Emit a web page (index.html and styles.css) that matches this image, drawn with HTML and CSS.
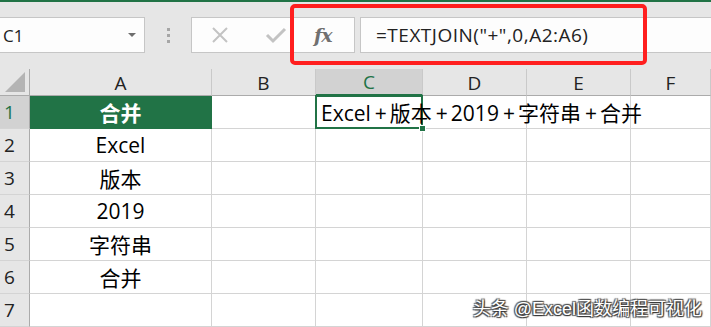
FILE: index.html
```html
<!DOCTYPE html>
<html lang="zh-CN">
<head>
<meta charset="utf-8">
<link rel="stylesheet" href="styles.css">
</head>
<body>
<div class="app">
  <div class="topline"></div>
  <div class="fbar">
    <div class="namebox"><span class="nb-text">C1</span><span class="nb-arrow"></span></div>
    <div class="grip"><i></i><i></i><i></i></div>
    <div class="btns">
      <svg class="ico" width="18" height="18" viewBox="0 0 18 18"><path d="M2 2 L16 16 M16 2 L2 16" stroke="#c3c3c3" stroke-width="2" fill="none"/></svg>
      <svg class="ico chk" width="22" height="18" viewBox="0 0 22 18"><path d="M2 9 L8 15 L20 3" stroke="#c3c3c3" stroke-width="3" fill="none"/></svg>
      <span class="fx">fx</span>
    </div>
    <div class="formula">=TEXTJOIN("+",0,A2:A6)</div>
  </div>
  <div class="sheet">
    <div class="hd corner"><span class="tri"></span></div>
    <div class="hd col">A</div>
    <div class="hd col">B</div>
    <div class="hd col sel">C</div>
    <div class="hd col">D</div>
    <div class="hd col">E</div>
    <div class="hd col last">F</div>

    <div class="rh sel">1</div>
    <div class="c ctr head">合并</div>
    <div class="c"></div>
    <div class="c active"><span class="overflow">Excel<span class="plus">+</span>版本<span class="plus">+</span>2019<span class="plus">+</span>字符串<span class="plus">+</span>合并</span><span class="handle"></span></div>
    <div class="c"></div>
    <div class="c"></div>
    <div class="c"></div>

    <div class="rh">2</div>
    <div class="c ctr">Excel</div>
    <div class="c"></div><div class="c"></div><div class="c"></div><div class="c"></div><div class="c"></div>

    <div class="rh">3</div>
    <div class="c ctr">版本</div>
    <div class="c"></div><div class="c"></div><div class="c"></div><div class="c"></div><div class="c"></div>

    <div class="rh">4</div>
    <div class="c ctr">2019</div>
    <div class="c"></div><div class="c"></div><div class="c"></div><div class="c"></div><div class="c"></div>

    <div class="rh">5</div>
    <div class="c ctr">字符串</div>
    <div class="c"></div><div class="c"></div><div class="c"></div><div class="c"></div><div class="c"></div>

    <div class="rh">6</div>
    <div class="c ctr">合并</div>
    <div class="c"></div><div class="c"></div><div class="c"></div><div class="c"></div><div class="c"></div>

    <div class="rh">7</div>
    <div class="c"></div>
    <div class="c"></div><div class="c"></div><div class="c"></div><div class="c"></div><div class="c"></div>
  </div>
  <div class="redbox"></div>
  <div class="watermark">头条 @Excel函数编程可视化</div>
</div>
</body>
</html>
```
FILE: styles.css
```css
html, body {
  margin: 0;
  padding: 0;
  background: #e6e6e6;
  overflow: hidden;
}
.app {
  position: relative;
  width: 711px;
  height: 327px;
  overflow: hidden;
  font-family: "Open Sans", "Noto Sans CJK SC", sans-serif;
  background: #e6e6e6;
}
.topline {
  height: 2px;
  background: #217346;
}
.fbar {
  height: 67px;
  display: flex;
  align-items: flex-start;
  padding-top: 15px;
  box-sizing: border-box;
}
.namebox {
  width: 146px;
  height: 36px;
  box-sizing: border-box;
  margin-left: -1px;
  background: #fdfdfd;
  border: 1px solid #c6c6c6;
  display: flex;
  align-items: center;
  justify-content: space-between;
  padding: 0 8px 0 3px;
}
.nb-text {
  font-family: "Open Sans", sans-serif;
  font-size: 17px;
  color: #222;
}
.nb-arrow {
  width: 0;
  height: 0;
  border-left: 4px solid transparent;
  border-right: 4px solid transparent;
  border-top: 4px solid #6e6e6e;
}
.grip {
  width: 46px;
  height: 36px;
  display: flex;
  flex-direction: column;
  align-items: center;
  justify-content: center;
  gap: 3px;
}
.grip i {
  display: block;
  width: 3px;
  height: 3px;
  background: #a6a6a6;
}
.btns {
  width: 164px;
  height: 36px;
  box-sizing: border-box;
  background: #fdfdfd;
  border: 1px solid #c6c6c6;
  display: flex;
  align-items: center;
  padding-left: 19px;
}
.ico.chk {
  margin-left: 36px;
}
.fx {
  margin-left: 27px;
  font-family: "DejaVu Serif", serif;
  font-style: italic;
  font-weight: bold;
  font-size: 19px;
  color: #707070;
  letter-spacing: -1px;
}
.formula {
  flex: 1;
  margin-left: 5px;
  height: 36px;
  box-sizing: border-box;
  background: #fdfdfd;
  border: 1px solid #c6c6c6;
  border-right: none;
  padding-left: 15px;
  font-family: "Open Sans", sans-serif;
  font-size: 19px;
  letter-spacing: 0.5px;
  line-height: 34px;
  color: #222;
}
.sheet {
  display: grid;
  grid-template-columns: 30px 182px 104px 107px 104px 104px 80px;
  grid-template-rows: 27px repeat(7, 33px);
  background: #fff;
}
.hd {
  background: #e6e6e6;
  border-bottom: 1px solid #ababab;
  box-sizing: border-box;
}
.col {
  border-right: 1px solid #c9c9c9;
  display: flex;
  align-items: center;
  justify-content: center;
  font-family: "Open Sans", sans-serif;
  font-size: 19px;
  color: #222;
  padding-top: 1px;
}
.col.sel {
  background: #d2d2d2;
  color: #217346;
  border-bottom: 2px solid #217346;
}
.corner {
  position: relative;
  border-right: 1px solid #ababab;
}
.tri {
  position: absolute;
  right: 4px;
  bottom: 3px;
  width: 0;
  height: 0;
  border-left: 20px solid transparent;
  border-bottom: 20px solid #b4b4b4;
}
.rh {
  background: #e6e6e6;
  border-right: 1px solid #ababab;
  border-bottom: 1px solid #d4d4d4;
  box-sizing: border-box;
  font-family: "Open Sans", sans-serif;
  font-size: 19px;
  color: #222;
  display: flex;
  align-items: center;
  padding-left: 4px;
}
.rh.sel {
  background: #d2d2d2;
  color: #217346;
}
.c {
  border-right: 1px solid #d4d4d4;
  border-bottom: 1px solid #d4d4d4;
  box-sizing: border-box;
  font-size: 21px;
  color: #000;
  display: flex;
  align-items: center;
  white-space: nowrap;
}
.ctr {
  justify-content: center;
}
.head {
  background: #217346;
  color: #fff;
  font-weight: bold;
  border-color: #217346;
}
.active {
  position: relative;
  overflow: visible;
  z-index: 2;
}
.active::before {
  content: "";
  position: absolute;
  left: -1px;
  top: -1px;
  right: -1px;
  bottom: -1px;
  border: 2px solid #217346;
  pointer-events: none;
}
.overflow {
  position: relative;
  padding-left: 5px;
}
.plus {
  margin: 0 3px 0 4px;
}
.handle {
  position: absolute;
  right: -4px;
  bottom: -4px;
  width: 7px;
  height: 7px;
  background: #217346;
  border: 1px solid #fff;
  box-sizing: border-box;
}
.redbox {
  position: absolute;
  left: 290px;
  top: 4px;
  width: 357px;
  height: 61px;
  box-sizing: border-box;
  border: 4px solid #ff1f1f;
  border-radius: 5px;
}
.watermark {
  position: absolute;
  right: 9px;
  bottom: 7px;
  font-size: 18px;
  color: #fff;
  text-shadow: 1px 1px 1px #333, -1px -1px 1px #555, 1px -1px 1px #444, -1px 1px 1px #444;
  font-family: "Liberation Sans", "Noto Sans CJK SC", sans-serif;
}
```
